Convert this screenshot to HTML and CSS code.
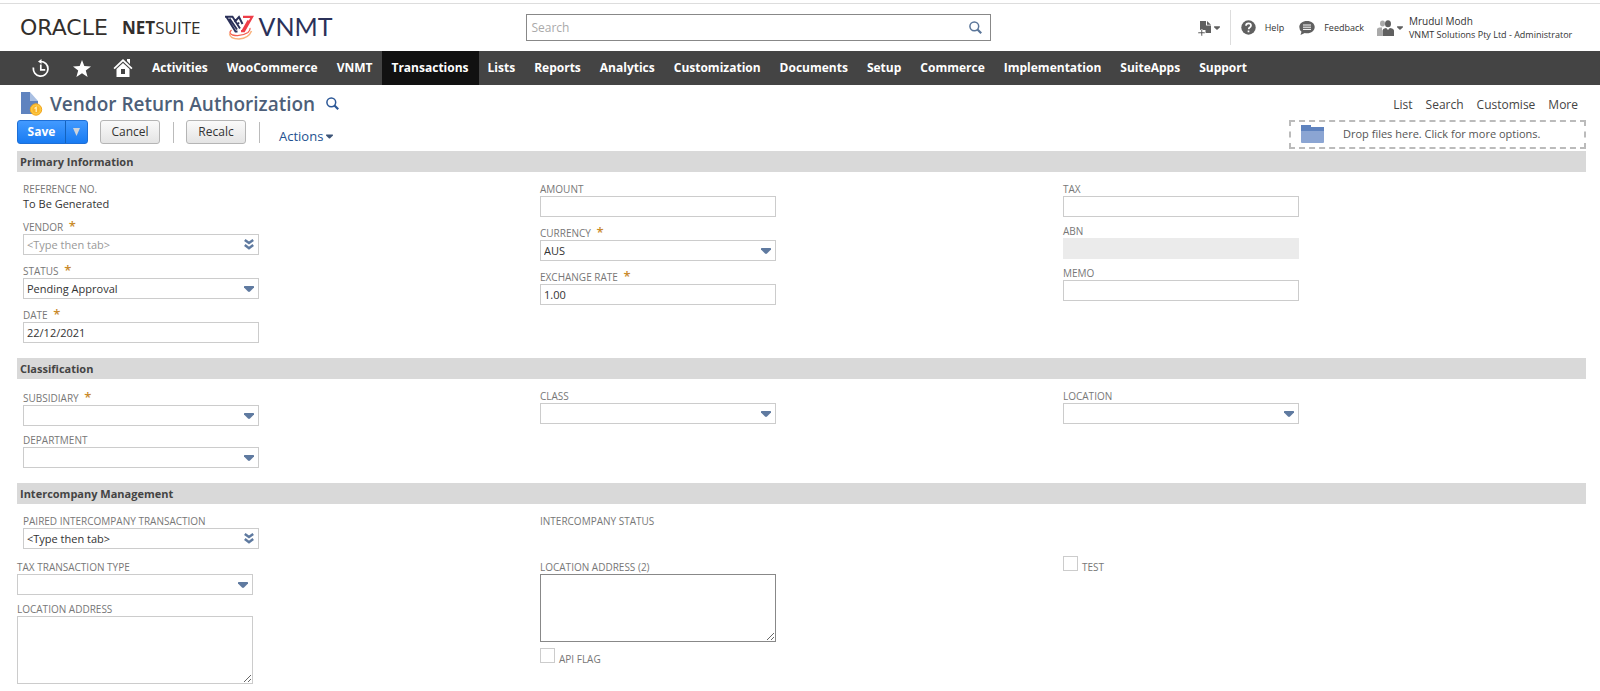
FILE: index.html
```html
<!DOCTYPE html>
<html lang="en">
<head>
<meta charset="utf-8">
<title>Vendor Return Authorization</title>
<link rel="stylesheet" href="styles.css">
</head>
<body>
<svg class="defs" aria-hidden="true">
  <symbol id="caret" viewBox="0 0 10 6"><path d="M.6 0h8.800q.6.1.6.8v.8L6 5.600q-1 .7-2 0L0 1.600V.8Q0 .1.6 0z" fill="currentColor"/></symbol>
  <symbol id="chevrons" viewBox="0 0 10 11"><path d="M.8 1l4.200 3 4.200-3M.8 6l4.200 3.200L9.200 6" fill="none" stroke="currentColor" stroke-width="2.500"/></symbol>
  <symbol id="lens" viewBox="0 0 13 13"><circle cx="5.300" cy="5.300" r="4.400" fill="none" stroke="currentColor" stroke-width="1.500"/><path d="M8.500 8.500l3.700 3.700" stroke="currentColor" stroke-width="2.200"/></symbol>
</svg>

<header class="topbar">
  <div class="brands">
    <a class="netsuite" href="#"><span class="oracle">ORACLE</span><span class="suite"><b>NET</b>SUITE</span></a>
    <a class="vnmt" href="#">
      <svg width="29" height="26" viewBox="0 0 29 26" aria-hidden="true">
        <path d="M6.500 15q-3.500 3 1 5 8 2.200 15.500-2.500 2.500-2 2-4.500" fill="none" stroke="#f4604f" stroke-width="1.300"/>
        <path d="M4.500 18.500q.5 5.500 9.500 5.500 9.500-.6 12.500-8" fill="none" stroke="#f9b27c" stroke-width="1.500"/>
        <path d="M0 1.800h7.500L15 13.500M1.500 2l9 14.500h2M4.500 3.500l7.500 11M9.500 7l4.500-5 3.500 7M12.500 9.500l1.500-2" fill="none" stroke="#2b3159" stroke-width="1.900"/>
        <path d="M18 1.800h9.200L19 16.200h-3M23.500 5.500l-6 10.500" fill="none" stroke="#ee3d48" stroke-width="2.200"/>
      </svg>
      <span>VNMT</span>
    </a>
  </div>
  <form class="search">
    <input type="text" aria-label="Search" placeholder="Search">
    <button type="button" aria-label="Run search"><svg width="13" height="13"><use href="#lens"/></svg></button>
  </form>
  <div class="tools">
    <button class="new" type="button" aria-label="Create new">
      <svg width="14" height="16" viewBox="0 0 14 16" fill="#606060"><path d="M2 1h6v4.500h5V13H7.500v-3H2z"/><path d="M9 1l4 3.700H9z"/><path d="M3 9.500h1.500v2.500H7v1.500H4.500V16H3v-2.500H0V12h3z" stroke="#fff" stroke-width=".5"/></svg>
      <svg class="tiny" width="6" height="4"><use href="#caret"/></svg>
    </button>
    <a class="help" href="#">
      <svg width="15" height="15" viewBox="0 0 15 15"><circle cx="7.500" cy="7.500" r="7.200" fill="#606060"/><path d="M5 5.800q0-2.500 2.500-2.500t2.500 2.200q0 1.200-1.300 2-1 .6-1 1.700M7.500 10.500v1.700" fill="none" stroke="#fff" stroke-width="1.700"/></svg>
      <span>Help</span>
    </a>
    <a class="feedback" href="#">
      <svg width="16" height="14" viewBox="0 0 16 14"><path d="M8 0c4.500 0 7.700 2.600 7.700 6s-3.200 6.300-7.700 6.300q-1.200 0-2.200-.2L1.500 14l1-3.200Q.3 9 .3 6C.3 2.600 3.500 0 8 0z" fill="#606060"/><path d="M4 4h8M4 6.200h8M4 8.400h8" stroke="#fff"/></svg>
      <span>Feedback</span>
    </a>
    <button class="role" type="button" aria-label="Change role">
      <svg width="17" height="16" viewBox="0 0 17 16"><g fill="#aaa"><ellipse cx="5.500" cy="3.500" rx="2.500" ry="3"/><path d="M0 16V9q.5-1.500 2.500-1.500H5V16z"/></g><g fill="#606060"><ellipse cx="11" cy="3.800" rx="3" ry="3.500"/><path d="M5.500 16v-5.500q.3-2 2.500-2.200l1.200-.3L11 10l1.800-2 1.500.3q2.400.2 2.700 2.200V16z"/></g></svg>
      <svg class="tiny" width="6" height="4"><use href="#caret"/></svg>
    </button>
    <div class="user"><div class="who">Mrudul Modh</div><div>VNMT Solutions Pty Ltd - Administrator</div></div>
  </div>
</header>

<nav class="nav">
  <a class="ico" href="#" aria-label="Recent"><svg width="18" height="18" viewBox="0 0 18 18" fill="none" stroke="#fff" stroke-width="1.700"><path d="M1.500 8.500A7.300 7.300 0 1 0 8.500 2.500M8.800 5.500v5.300h4.400"/><path d="M9.500 0v5L6 2.500z" fill="#fff" stroke="none"/></svg></a>
  <a class="ico" href="#" aria-label="Shortcuts"><svg width="18" height="17" viewBox="0 0 18 17"><path d="M9 0l2.300 6.100 6.700.3-5.200 4.200L14.600 17 9 13.300 3.400 17l1.800-6.400L0 6.400l6.700-.3z" fill="#fff"/></svg></a>
  <a class="ico" href="#" aria-label="Home"><svg width="20" height="18" viewBox="0 0 20 18"><path d="M10 0l9.500 9-1.200 1.200L10 2.500l-8.300 7.700L.5 9zM14 0h3v5l-3-3z" fill="#fff"/><path d="M10 4l6.500 6v8h-13v-8z" fill="#fff"/><path d="M8 10h4v5H8z" fill="#444"/></svg></a>
  <a href="#">Activities</a><a href="#">WooCommerce</a><a href="#">VNMT</a><a class="on" href="#" aria-current="page">Transactions</a><a href="#">Lists</a><a href="#">Reports</a><a href="#">Analytics</a><a href="#">Customization</a><a href="#">Documents</a><a href="#">Setup</a><a href="#">Commerce</a><a href="#">Implementation</a><a href="#">SuiteApps</a><a href="#">Support</a>
</nav>

<main class="page">
  <div class="heading">
    <svg width="22" height="24" viewBox="0 0 22 24" aria-hidden="true"><path d="M0 0h9v9h8v13H0z" fill="#5f83bf"/><path d="M9 0l8 9H9z" fill="#a9bfe2"/><circle cx="15" cy="17.500" r="5.700" fill="#fcc63f" stroke="#f2a51d"/><circle cx="15" cy="17.500" r="3.600" fill="#f9b42b"/><path d="M13.500 16.500l1.700-1.200v4.700" fill="none" stroke="#fff3c4" stroke-width="1.200"/></svg>
    <h1>Vendor Return Authorization</h1>
    <a class="find" href="#" aria-label="Quick find"><svg width="13" height="13"><use href="#lens"/></svg></a>
    <div class="links"><a href="#">List</a><a href="#">Search</a><a href="#">Customise</a><a href="#">More</a></div>
  </div>
  <div class="bar">
    <div class="split"><button type="button">Save</button><button type="button" class="more" aria-label="More save options"><svg width="7" height="8" viewBox="0 0 8 9"><path d="M0 0h8L4 9z" fill="#cfd4da"/></svg></button></div>
    <button type="button" class="btn">Cancel</button>
    <span class="sep"></span>
    <button type="button" class="btn">Recalc</button>
    <span class="sep"></span>
    <button type="button" class="actions">Actions<svg class="tiny" width="7" height="5"><use href="#caret"/></svg></button>
    <button type="button" class="drop">
      <svg width="23" height="18" viewBox="0 0 23 18" aria-hidden="true"><path d="M0 0h10v2h13v5H0z" fill="#5f83bf"/><path d="M0 6h23v11q0 1-1 1H1q-1 0-1-1z" fill="#8ba5d3"/></svg>
      <span>Drop files here. Click for more options.</span>
    </button>
  </div>

  <section>
    <h2>Primary Information</h2>
    <div class="cols inset">
      <div class="col">
        <div class="field"><span class="label">REFERENCE NO.</span><span class="value">To Be Generated</span></div>
        <div class="field req"><label for="vendor">VENDOR <i>*</i></label><div class="box"><input id="vendor" type="text" placeholder="&lt;Type then tab&gt;"><svg class="arrow" width="10" height="11"><use href="#chevrons"/></svg></div></div>
        <div class="field req"><label for="status">STATUS <i>*</i></label><div class="box"><select id="status"><option>Pending Approval</option></select><svg class="arrow" width="10" height="6"><use href="#caret"/></svg></div></div>
        <div class="field req"><label for="date">DATE <i>*</i></label><div class="box"><input id="date" type="text" value="22/12/2021"></div></div>
      </div>
      <div class="col">
        <div class="field"><label for="amount">AMOUNT</label><div class="box"><input id="amount" type="text"></div></div>
        <div class="field req"><label for="currency">CURRENCY <i>*</i></label><div class="box"><select id="currency"><option>AUS</option></select><svg class="arrow" width="10" height="6"><use href="#caret"/></svg></div></div>
        <div class="field req"><label for="rate">EXCHANGE RATE <i>*</i></label><div class="box"><input id="rate" type="text" value="1.00"></div></div>
      </div>
      <div class="col">
        <div class="field"><label for="tax">TAX</label><div class="box"><input id="tax" type="text"></div></div>
        <div class="field"><label for="abn">ABN</label><div class="box"><input id="abn" type="text" disabled></div></div>
        <div class="field"><label for="memo">MEMO</label><div class="box"><input id="memo" type="text"></div></div>
      </div>
    </div>
  </section>

  <section>
    <h2>Classification</h2>
    <div class="cols inset">
      <div class="col">
        <div class="field req"><label for="subsidiary">SUBSIDIARY <i>*</i></label><div class="box"><select id="subsidiary"><option></option></select><svg class="arrow" width="10" height="6"><use href="#caret"/></svg></div></div>
        <div class="field"><label for="department">DEPARTMENT</label><div class="box"><select id="department"><option></option></select><svg class="arrow" width="10" height="6"><use href="#caret"/></svg></div></div>
      </div>
      <div class="col">
        <div class="field"><label for="class">CLASS</label><div class="box"><select id="class"><option></option></select><svg class="arrow" width="10" height="6"><use href="#caret"/></svg></div></div>
      </div>
      <div class="col">
        <div class="field"><label for="location">LOCATION</label><div class="box"><select id="location"><option></option></select><svg class="arrow" width="10" height="6"><use href="#caret"/></svg></div></div>
      </div>
    </div>
  </section>

  <section>
    <h2>Intercompany Management</h2>
    <div class="cols inset tight">
      <div class="col">
        <div class="field"><label for="paired">PAIRED INTERCOMPANY TRANSACTION</label><div class="box"><input id="paired" type="text" value="&lt;Type then tab&gt;"><svg class="arrow" width="10" height="11"><use href="#chevrons"/></svg></div></div>
      </div>
      <div class="col">
        <div class="field"><span class="label">INTERCOMPANY STATUS</span></div>
      </div>
    </div>
    <div class="cols rest">
      <div class="col">
        <div class="field"><label for="taxtype">TAX TRANSACTION TYPE</label><div class="box"><select id="taxtype"><option></option></select><svg class="arrow" width="10" height="6"><use href="#caret"/></svg></div></div>
        <div class="field"><label for="addr">LOCATION ADDRESS</label><div class="box"><textarea id="addr"></textarea></div></div>
      </div>
      <div class="col">
        <div class="field"><label for="addr2">LOCATION ADDRESS (2)</label><div class="box"><textarea id="addr2" class="dark"></textarea></div></div>
        <div class="check"><input type="checkbox" id="api"><label for="api">API FLAG</label></div>
      </div>
      <div class="col">
        <div class="check"><input type="checkbox" id="test"><label for="test">TEST</label></div>
      </div>
    </div>
  </section>
</main>
</body>
</html>
```

FILE: styles.css
```css
* { box-sizing: border-box; }
body {
  margin: 0;
  padding-top: 3px;
  background: #fff;
  color: #333;
  font: 11px/16px "Open Sans", "Noto Sans", sans-serif;
}
a { color: inherit; text-decoration: none; }
button, input, select, textarea { font: inherit; color: inherit; margin: 0; }
button { padding: 0; border: 0; background: none; cursor: pointer; }
svg { display: block; flex: none; }
.defs { position: absolute; width: 0; height: 0; }

/* top bar */
.topbar {
  display: grid;
  grid-template-columns: minmax(0, 46fr) 465px minmax(0, 54fr);
  align-items: center;
  height: 48px;
  padding: 0 14px 0 20px;
  border-top: 1px solid #ddd;
}
.brands { display: flex; align-items: center; gap: 25px; }
.netsuite { display: flex; align-items: center; gap: 8px; color: #332f2c; line-height: 24px; }
.oracle { min-width: 94px; font-family: "DejaVu Sans", sans-serif; font-size: 22px; }
.suite { font-size: 17px; }
.vnmt { display: flex; align-items: center; gap: 4px; color: #2b3159; font: 25px/28px Lato, sans-serif; }
.vnmt span { padding-bottom: 4px; }
.search {
  display: flex;
  align-items: center;
  height: 27px;
  padding: 0 8px 0 4px;
  border: 1px solid #888;
}
.search input { flex: 1; min-width: 0; padding: 0; border: 0; outline: 0; font-size: 12px; }
.search input::placeholder { color: #aaa; opacity: 1; }
.search button { color: #5a7599; }
.tools { display: flex; align-items: center; justify-content: flex-end; font-size: 9px; line-height: 13px; white-space: nowrap; }
.tools a, .tools button { display: flex; align-items: center; }
.tiny { color: #606060; }
.new { gap: 2px; height: 35px; padding-right: 10px; border-right: 1px solid #ddd; }
.help { gap: 9px; margin-left: 10px; }
.feedback { gap: 9px; margin-left: 15px; }
.role { gap: 3px; margin-left: 13px; }
.user { margin-left: 6px; width: 177px; }
.who { font-size: 10px; }

/* main menu */
.nav {
  display: flex;
  align-items: stretch;
  height: 34px;
  padding-left: 20px;
  background: #444;
  color: #fff;
  font-size: 12px;
  font-weight: 700;
}
.nav a { display: flex; align-items: center; padding: 0 10px 0 9px; }
.nav .ico { width: 41px; justify-content: center; padding: 0; }
.nav .on { background: #111; }

/* heading */
.page { padding: 0 14px 0 17px; }
.heading { display: flex; align-items: center; height: 35px; padding: 2px 8px 0 4px; }
h1 { margin: 0 11px 0 7px; color: #4d5f79; font-size: 19px; font-weight: 600; line-height: 24px; }
.find { color: #2b5797; }
.links { display: flex; gap: 13px; margin-left: auto; padding-top: 3px; font-size: 12px; color: #444; }
.bar { display: flex; align-items: flex-start; height: 31px; }
.split { display: flex; height: 24px; border: 1px solid #1e6fd6; border-radius: 3px; background: linear-gradient(#439aff, #187bf2); color: #fff; font-weight: 700; font-size: 12px; margin-right: 12px; }
.split button { width: 47px; }
.split .more { display: flex; align-items: center; justify-content: center; width: 22px; border-left: 1px solid #1462bd; }
.btn { width: 60px; height: 24px; border: 1px solid #b5b5b5; border-radius: 3px; background: linear-gradient(#fafafa, #e4e4e4); font-size: 12px; }
.sep { width: 1px; height: 21px; margin: 2px 12px 0 13px; background: #bbb; }
.actions { display: flex; align-items: center; gap: 3px; height: 32px; margin-left: 7px; color: #24518f; font-size: 13px; }
.actions .tiny { color: #3d5578; }
.drop {
  display: flex;
  align-items: center;
  gap: 19px;
  width: 297px;
  height: 29px;
  margin-left: auto;
  padding: 0 10px 2px;
  border: 2px dashed #bbb;
  color: #555;
}

/* form sections */
h2 { margin: 0; padding: 0 3px; background: #d9d9d9; color: #444; font-size: 11px; line-height: 21px; }
.cols { display: grid; grid-template-columns: repeat(3, 1fr); padding: 8px 0 10px; }
.tight { padding-bottom: 4px; }
.rest { padding-top: 0; }
.inset .col:first-child { padding-left: 6px; }
.field { margin-bottom: 5px; }
.field label, .label { display: block; height: 16px; color: #777; font-size: 10px; line-height: 18px; }
.req label { height: 18px; line-height: 22px; }
.req i { margin-left: 3px; color: #c98a2b; font-size: 13px; font-weight: 600; font-style: normal; line-height: 13px; }
.value { display: block; height: 15px; line-height: 15px; }
.box { position: relative; width: 236px; }
.box input, .box select, .box textarea {
  display: block;
  width: 100%;
  height: 21px;
  padding: 0 3px;
  border: 1px solid #ccc;
  border-radius: 0;
  background: #fff;
  outline: 0;
  appearance: none;
}
.box input::placeholder { color: #999; opacity: 1; }
.box input:disabled { background: #ebebeb; border-color: #ebebeb; }
.box textarea { height: 68px; resize: both; }
.box .dark { border-color: #888; }
.arrow { position: absolute; top: 0; bottom: 0; right: 5px; margin: auto 0; color: #5f7aa0; pointer-events: none; }
.check { display: flex; align-items: flex-start; gap: 4px; height: 21px; margin-top: 6px; color: #777; font-size: 10px; line-height: 22px; }
.check:first-child { margin-top: -2px; }
.check input { appearance: none; width: 15px; height: 15px; border: 1px solid #ccc; background: #fff; }
```
